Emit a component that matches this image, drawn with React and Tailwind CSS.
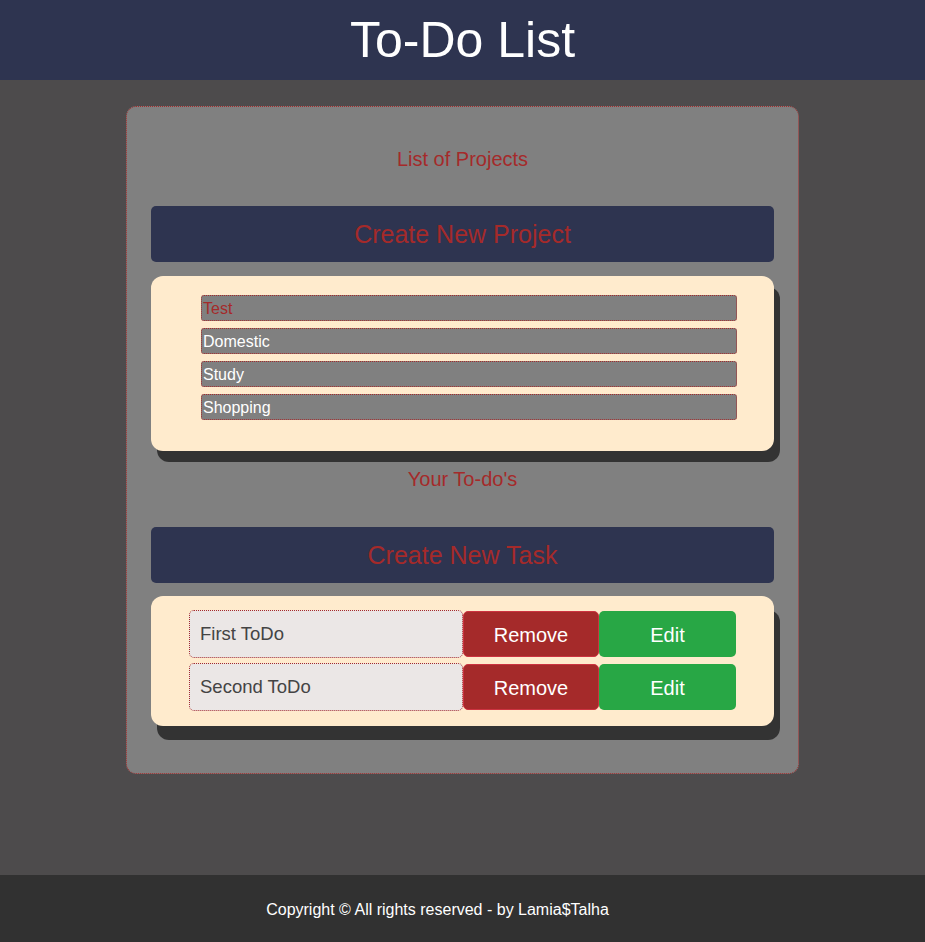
import React from "react";

const projects = [
  { name: "Test", active: true },
  { name: "Domestic" },
  { name: "Study" },
  { name: "Shopping" },
];

const todos = ["First ToDo", "Second ToDo"];

function App() {
  return (
    <div className="min-h-screen flex flex-col font-['Liberation_Sans',Arial,sans-serif] bg-[#4d4b4c]">
      {/* Header */}
      <header className="h-[80px] bg-[#2e3450] flex items-center justify-center">
        <h1 className="text-[50px] leading-none text-white">To-Do List</h1>
      </header>

      {/* Main */}
      <main className="pt-[26px] pb-[101px] flex justify-center">
        <div className="w-[673px] bg-[#808080] border border-dotted border-[#a52a2a] rounded-[10px] px-[24px] pt-[41px] pb-[47px]">
          <h2 className="text-center text-[20px] leading-[23px] text-[#a52a2a]">
            List of Projects
          </h2>
          <button className="mt-[35px] w-full h-[56px] pt-[2px] bg-[#2e3450] rounded-[5px] text-[25px] text-[#a52a2a]">
            Create New Project
          </button>
          <div className="mt-[14px] bg-[#ffebcd] rounded-[12px] shadow-[6px_11px_0_#333333] pt-[19px] pb-[31px] pl-[50px] pr-[37px] flex flex-col gap-[7px]">
            {projects.map((p) => (
              <div
                key={p.name}
                className={`h-[26px] flex items-center pt-[1px] px-[1px] bg-[#808080] border border-dotted border-[#a52a2a] rounded-[3px] text-[16px] ${
                  p.active ? "text-[#a52a2a]" : "text-white"
                }`}
              >
                {p.name}
              </div>
            ))}
          </div>

          <h2 className="mt-[17px] text-center text-[20px] leading-[23px] text-[#a52a2a]">
            Your To-do's
          </h2>
          <button className="mt-[36px] w-full h-[56px] pt-[2px] bg-[#2e3450] rounded-[5px] text-[25px] text-[#a52a2a]">
            Create New Task
          </button>
          <div className="mt-[13px] bg-[#ffebcd] rounded-[12px] shadow-[6px_14px_0_#333333] pt-[14px] pb-[15px] pl-[38px] pr-[37px] flex flex-col gap-[5px]">
            {todos.map((t) => (
              <div key={t} className="flex items-center">
                <div className="w-[274px] h-[48px] flex items-center pl-[10px] bg-[#ebe7e6] border border-dotted border-[#a52a2a] rounded-[5px] text-[18.5px] text-[#444444]">
                  {t}
                </div>
                <button className="w-[136px] h-[46px] pt-[1px] bg-[#a52a2a] border border-[#cc3340] rounded-[5px] text-[20px] text-white">
                  Remove
                </button>
                <button className="w-[137px] h-[46px] pt-[1px] bg-[#28a745] rounded-[5px] text-[20px] text-white">
                  Edit
                </button>
              </div>
            ))}
          </div>
        </div>
      </main>

      {/* Footer */}
      <footer className="h-[68px] bg-[#313131] flex items-center justify-center pr-[50px] pt-[2px]">
        <p className="text-[16px] text-white">
          Copyright © All rights reserved - by Lamia$Talha
        </p>
      </footer>
    </div>
  );
}

export default App;
